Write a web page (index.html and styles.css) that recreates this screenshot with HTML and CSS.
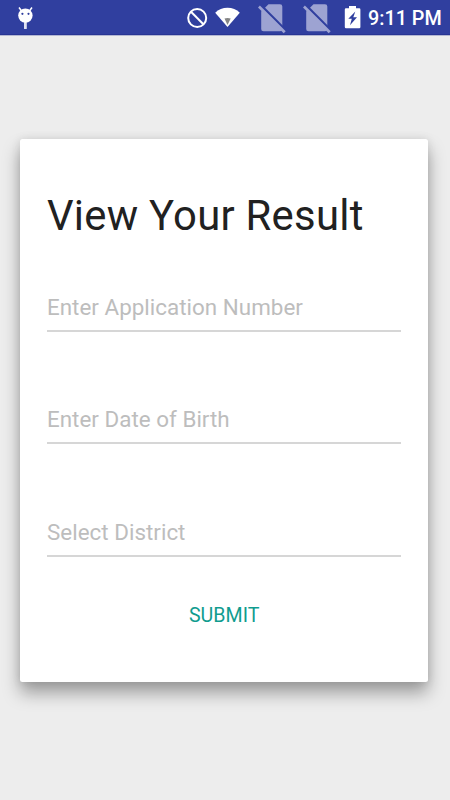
FILE: index.html
```html
<!DOCTYPE html>
<html lang="en">
<head>
<meta charset="utf-8">
<title>View Your Result</title>
<link rel="stylesheet" href="styles.css">
</head>
<body>
<header class="status">
  <svg class="debug" width="16" height="36" viewBox="18 0 16 36" fill="#fff">
    <path d="M19 7.5l3 4M32 7.5l-3 4" stroke="#fff" stroke-width="1.5"/>
    <circle cx="25.4" cy="15.6" r="7.2"/>
    <rect x="24" y="22" width="2.8" height="7" rx=".6" opacity=".85"/>
    <circle class="hole" cx="22.4" cy="13.8" r="1.1"/><circle class="hole" cx="28.5" cy="13.8" r="1.1"/>
  </svg>
  <div class="tray">
    <svg width="22" height="36" viewBox="186 0 22 36" fill="none" stroke="#fff" stroke-width="2">
      <circle cx="197.2" cy="18" r="9"/><path d="M191 11.8l12.4 12.4"/>
    </svg>
    <svg class="wifi" width="26" height="36" viewBox="215 0 26 36">
      <path fill="#fff" d="M215.2 12.8C221.5 6 233.5 6 239.8 12.8L227.5 27z"/>
      <path fill="#858585" d="M224.5 18.6q3-1.3 6.2 0L227.5 25z"/>
    </svg>
    <svg class="sim" width="28" height="36" viewBox="258 0 28 36">
      <path fill="#9da3d2" d="M268.5 4.300H280q2.300 0 2.300 2.300V29q0 2.300-2.300 2.300H263.500q-2.300 0-2.300-2.300V11.500z"/>
      <path stroke="#303f9f" stroke-width="2.500" d="M260.500 5L286.500 31"/>
      <path stroke="#9da3d2" stroke-width="2.800" d="M258.900 6.500L284.700 32.300"/>
    </svg>
    <svg class="sim2" width="28" height="36" viewBox="258 0 28 36">
      <path fill="#9da3d2" d="M268.5 4.300H280q2.300 0 2.300 2.300V29q0 2.300-2.300 2.300H263.500q-2.300 0-2.300-2.300V11.500z"/>
      <path stroke="#303f9f" stroke-width="2.500" d="M260.500 5L286.500 31"/>
      <path stroke="#9da3d2" stroke-width="2.800" d="M258.900 6.500L284.700 32.300"/>
    </svg>
    <svg class="battery" width="17" height="36" viewBox="344 0 17 36">
      <path fill="#fff" d="M349 6h7v2.300h3.200q1.200 0 1.200 1.200V27q0 1.200-1.200 1.200H346q-1.200 0-1.200-1.200V9.500q0-1.200 1.200-1.200h3z"/>
      <path class="hole" d="M355.300 11.500L348.300 18.800H351.800L350 25.200L357 17.300H353.300z"/>
    </svg>
    <span class="time">9:11 PM</span>
  </div>
</header>
<main class="page">
  <form class="card">
    <h1 class="title">View Your Result</h1>
    <div class="field">Enter Application Number</div>
    <div class="field">Enter Date of Birth</div>
    <div class="field">Select District</div>
    <button class="submit" type="button">SUBMIT</button>
  </form>
</main>
</body>
</html>
```
FILE: styles.css
```css
* { box-sizing: border-box; }
body {
  margin: 0;
  height: 800px;
  overflow: hidden;
  background: #ededed;
  font-family: Roboto, "Liberation Sans", sans-serif;
}
.status {
  display: flex;
  justify-content: space-between;
  height: 36px;
  padding: 0 9px 0 18px;
  background: linear-gradient(#303f9f 34px, #283593 34px, #283593 35px, #b4b8d3 35px);
  color: #fff;
}
.status svg { display: block; flex: none; }
.hole { fill: #303f9f; }
.tray { display: flex; }
.wifi { margin-left: 7px; }
.sim { margin-left: 17px; }
.sim2 { margin-left: 17px; }
.battery { margin-left: 13px; }
.time {
  width: 73px;
  margin-left: 7px;
  font-size: 19.8px;
  font-weight: 500;
  line-height: 38px;
  white-space: nowrap;
}
.page { padding: 103px 22px 0 20.4px; }
.card {
  display: flex;
  flex-direction: column;
  height: 543.4px;
  padding: 50px 26.6px 0;
  background: #fff;
  border-radius: 2.5px;
  box-shadow: 0 11px 17px rgba(0, 0, 0, .34), 0 0 10px rgba(0, 0, 0, .1);
}
.title {
  margin: 0 0 42px;
  font-size: 41.8px;
  font-weight: 400;
  letter-spacing: .27px;
  line-height: 54px;
  color: #212121;
  white-space: nowrap;
}
.field {
  height: 46.5px;
  margin-bottom: 66px;
  background: linear-gradient(#d6d6d6, #d6d6d6) bottom / 100% 2px no-repeat;
  font-size: 22.4px;
  letter-spacing: .02px;
  line-height: 44px;
  color: #bdbdbd;
}
.field:nth-of-type(2) { line-height: 43px; }
.submit {
  align-self: center;
  margin-top: -31px;
  padding: 0;
  border: 0;
  background: none;
  font: 400 19.6px/47px Roboto, sans-serif;
  color: #119c8f;
}
```
